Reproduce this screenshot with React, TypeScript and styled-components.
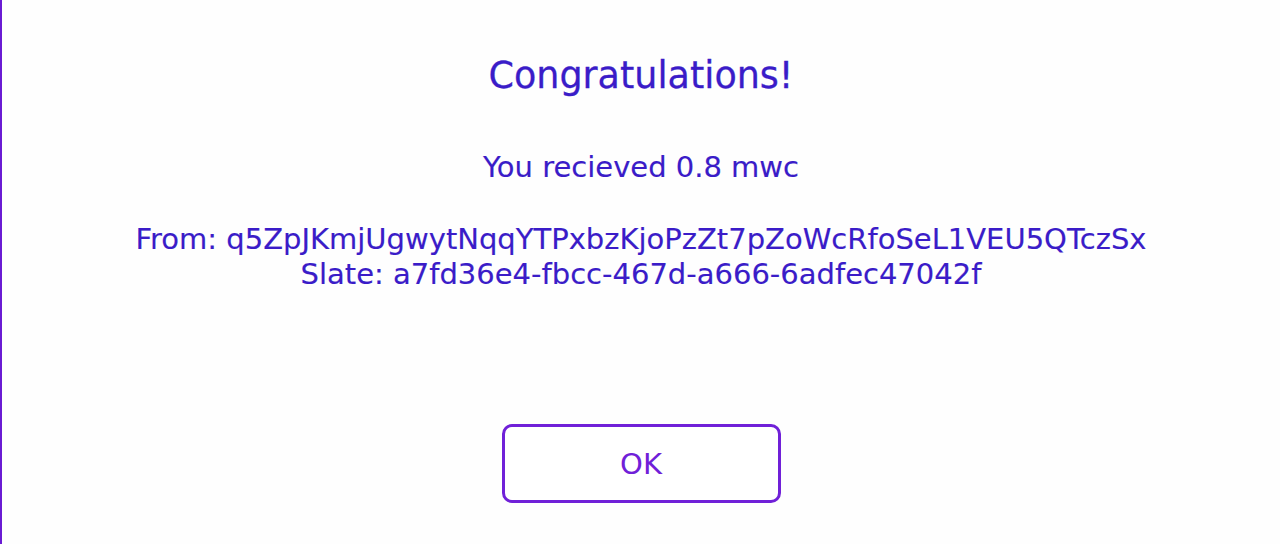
import React from "react";
import styled, { createGlobalStyle } from "styled-components";

const Global = createGlobalStyle`
  html, body { margin: 0; padding: 0; background: #ffffff; }
  body { font-family: "DejaVu Sans", "Liberation Sans", sans-serif; }
  * { box-sizing: border-box; }
`;

const Page = styled.div`
  width: 1280px;
  height: 544px;
  border-left: 2px solid #6a1bd3;
  background: #fefefe;
  display: flex;
  flex-direction: column;
  align-items: center;
  padding-top: 54px;
`;

const Title = styled.h1`
  margin: 0;
  font-size: 36.5px;
  font-weight: normal;
  line-height: 44px;
  color: #3a1cc8;
  -webkit-text-stroke: 0.3px #3a1cc8;
`;

const Message = styled.p<{ $gap: number; $lh: number }>`
  margin: 0;
  margin-top: ${(p) => p.$gap}px;
  font-size: 29px;
  line-height: ${(p) => p.$lh}px;
  color: #3a1cc8;
  text-align: center;
  -webkit-text-stroke: 0.15px #3a1cc8;
`;

const OkButton = styled.button`
  margin-top: 132px;
  width: 279px;
  height: 79px;
  border: 3px solid #7020d8;
  border-radius: 10px;
  background: #ffffff;
  color: #7020d8;
  font-family: "DejaVu Sans", "Liberation Sans", sans-serif;
  font-size: 29px;
  padding: 0;
  cursor: pointer;
`;

export default function App() {
  return (
    <>
      <Global />
      <Page>
        <Title>Congratulations!</Title>
        <Message $gap={52} $lh={34}>You recieved 0.8 mwc</Message>
        <Message $gap={38} $lh={35}>
          From: q5ZpJKmjUgwytNqqYTPxbzKjoPzZt7pZoWcRfoSeL1VEU5QTczSx
          <br />
          Slate: a7fd36e4-fbcc-467d-a666-6adfec47042f
        </Message>
        <OkButton>OK</OkButton>
      </Page>
    </>
  );
}
